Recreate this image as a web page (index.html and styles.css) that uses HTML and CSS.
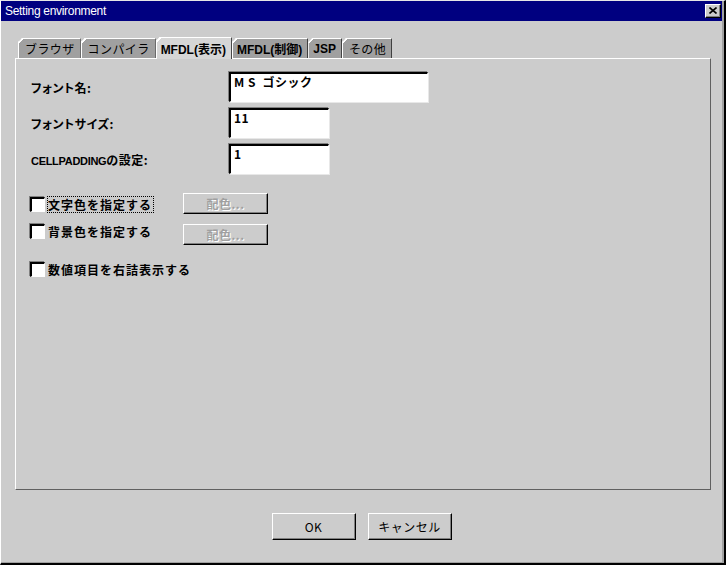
FILE: index.html
```html
<!DOCTYPE html>
<html lang="ja">
<head>
<meta charset="utf-8">
<title>Setting environment</title>
<link rel="stylesheet" href="styles.css">
</head>
<body>
<div class="window">
  <div class="titlebar">
    <span class="title">Setting environment</span>
    <span class="close">
      <svg width="8" height="7" viewBox="0 0 8 7"><path d="M0.5 0.5 L7.5 6.5 M7.5 0.5 L0.5 6.5" stroke="#000" stroke-width="1.6" fill="none"/></svg>
    </span>
  </div>
  <div class="tabs">
    <div class="tab">ブラウザ</div>
    <div class="tab">コンパイラ</div>
    <div class="tab tab-bold tab-active">MFDL(表示)</div>
    <div class="tab tab-bold">MFDL(制御)</div>
    <div class="tab tab-bold">JSP</div>
    <div class="tab">その他</div>
  </div>
  <div class="panel">
    <div class="form">
      <div class="label">フォント名:</div>
      <div class="field field-wide">M S&nbsp; ゴシック</div>
      <div class="label">フォントサイズ:</div>
      <div class="field">11</div>
      <div class="label"><span class="latin">CELLPADDING</span>の設定:</div>
      <div class="field">1</div>
    </div>
    <div class="row row-first">
      <div class="check-group check-offset">
        <span class="checkbox"></span><span class="check-text focused">文字色を指定する</span>
      </div>
      <button class="btn btn-disabled">配色...</button>
    </div>
    <div class="row row-second">
      <div class="check-group">
        <span class="checkbox"></span><span class="check-text">背景色を指定する</span>
      </div>
      <button class="btn btn-disabled">配色...</button>
    </div>
    <div class="row row-third">
      <div class="check-group">
        <span class="checkbox"></span><span class="check-text">数値項目を右詰表示する</span>
      </div>
    </div>
  </div>
  <div class="actions">
    <button class="btn btn-action">OK</button>
    <button class="btn btn-action">キャンセル</button>
  </div>
</div>
</body>
</html>
```
FILE: styles.css
```css
* { box-sizing: border-box; }
html, body { margin: 0; padding: 0; background: #cccccc; }
body { font-family: "Liberation Sans", "Noto Sans CJK JP", sans-serif; font-size: 12px; color: #000; }

.window {
  width: 726px;
  height: 565px;
  background: #cccccc;
  border-top: 1px solid #e6e6e6;
  border-left: 1px solid #ffffff;
  border-right: 2px solid #000;
  border-bottom: 2px solid #000;
  padding-right: 2px;
  box-shadow: inset -2px -1px 0 #a0a0a0;
  display: flex;
  flex-direction: column;
}

.titlebar {
  height: 20px;
  background: #000080;
  color: #fff;
  display: flex;
  align-items: center;
  padding-left: 4px;
  padding-right: 1px;
}
.title { font-size: 12px; letter-spacing: -0.3px; }
.close {
  margin-left: auto;
  width: 16px;
  height: 14px;
  background: #cccccc;
  border-top: 1px solid #fff;
  border-left: 1px solid #fff;
  border-right: 1px solid #000;
  border-bottom: 1px solid #000;
  box-shadow: inset -1px -1px 0 #808080;
  display: flex;
  align-items: center;
  justify-content: center;
}
.close svg { display: block; margin-left: -1px; margin-top: -1px; }

.tabs {
  margin-top: 17px;
  margin-left: 17px;
  height: 20px;
  display: flex;
  align-items: flex-end;
}
.tab {
  position: relative;
  height: 20px;
  padding: 0 5px 0 6px;
  background: #a0a0a0;
  border-top: 1px solid #fff;
  border-left: 1px solid #fff;
  border-right: 1px solid #404040;
  clip-path: polygon(4px 0, 100% 0, 100% 100%, 0 100%, 0 4px);
  display: flex;
  align-items: center;
  font-family: "Noto Sans CJK JP", sans-serif;
  font-size: 12px;
  letter-spacing: 0.4px;
  white-space: nowrap;
}
.tab::before {
  content: "";
  position: absolute;
  top: -1px;
  left: -1px;
  width: 5px;
  height: 5px;
  background: linear-gradient(135deg, transparent 0 38%, #fff 38% 62%, transparent 62%);
}
.tab-bold {
  font-family: "Liberation Sans", "Noto Sans CJK JP", sans-serif;
  font-weight: bold;
  letter-spacing: 0;
  padding: 0 5px 0 4px;
}
.tab-active {
  background: #d6d6d6;
  height: 22px;
  margin-bottom: -1px;
  z-index: 2;
}

.panel {
  margin-left: 14px;
  width: 696px;
  height: 432px;
  border-top: 1px solid #fff;
  border-left: 1px solid #fff;
  border-right: 1px solid #606060;
  border-bottom: 1px solid #606060;
  padding: 13px 0 0 15px;
  position: relative;
  z-index: 1;
}

.form {
  display: grid;
  grid-template-columns: 198px auto;
  grid-auto-rows: 30px;
  row-gap: 6px;
  align-items: center;
}
.label {
  font-family: "Noto Sans CJK JP", sans-serif;
  font-weight: bold;
  font-size: 12px;
  font-feature-settings: "palt";
  letter-spacing: 0.5px;
}
.latin {
  font-family: "Liberation Sans", sans-serif;
  font-size: 11px;
  letter-spacing: -0.3px;
}
.field {
  width: 100px;
  height: 30px;
  background: #fff;
  border-top: 2px solid #000;
  border-left: 2px solid #000;
  border-right: 1px solid #fff;
  border-bottom: 1px solid #fff;
  box-shadow: -1px -1px 0 #808080, 1px 1px 0 #e8e8e8;
  padding: 0 3px;
  font-family: "Noto Sans CJK JP", sans-serif;
  font-weight: bold;
  font-size: 12px;
  line-height: 15px;
  letter-spacing: 0.5px;
}
.field-wide { width: 199px; }

.row {
  display: flex;
  align-items: flex-start;
}
.row-first { margin-top: 19px; height: 21px; }
.row-second { margin-top: 10px; height: 21px; }
.row-third { margin-top: 17px; }
.check-group {
  width: 153px;
  margin-left: -1px;
  display: flex;
  align-items: center;
  height: 15px;
}
.check-offset { margin-top: 4px; }
.checkbox {
  width: 15px;
  height: 15px;
  background: #fff;
  border-top: 2px solid #000;
  border-left: 2px solid #000;
  border-right: 1px solid #fff;
  border-bottom: 1px solid #fff;
  box-shadow: -1px -1px 0 #808080;
  flex: none;
}
.check-text {
  margin-left: 3px;
  font-family: "Noto Sans CJK JP", sans-serif;
  font-weight: bold;
  font-size: 12px;
  letter-spacing: 1px;
  line-height: 15px;
  white-space: nowrap;
  padding: 0 1px 0 0;
}
.focused { outline: 1px dotted #000; outline-offset: 0px; }

.btn {
  margin: 0;
  background: #cccccc;
  border-top: 1px solid #fff;
  border-left: 1px solid #fff;
  border-right: 1px solid #000;
  border-bottom: 1px solid #000;
  box-shadow: inset -1px -1px 0 #808080;
  font-family: "Noto Sans CJK JP", sans-serif;
  font-size: 12px;
  padding: 0;
  color: #000;
}
.btn-disabled {
  width: 85px;
  height: 21px;
  color: #a0a0a0;
  font-weight: bold;
  text-shadow: 1px 1px 0 #fff;
  letter-spacing: 0.5px;
}

.actions {
  margin-top: 23px;
  display: flex;
  justify-content: center;
  gap: 12px;
}
.btn-action {
  width: 84px;
  height: 27px;
  letter-spacing: 0.5px;
}
```
